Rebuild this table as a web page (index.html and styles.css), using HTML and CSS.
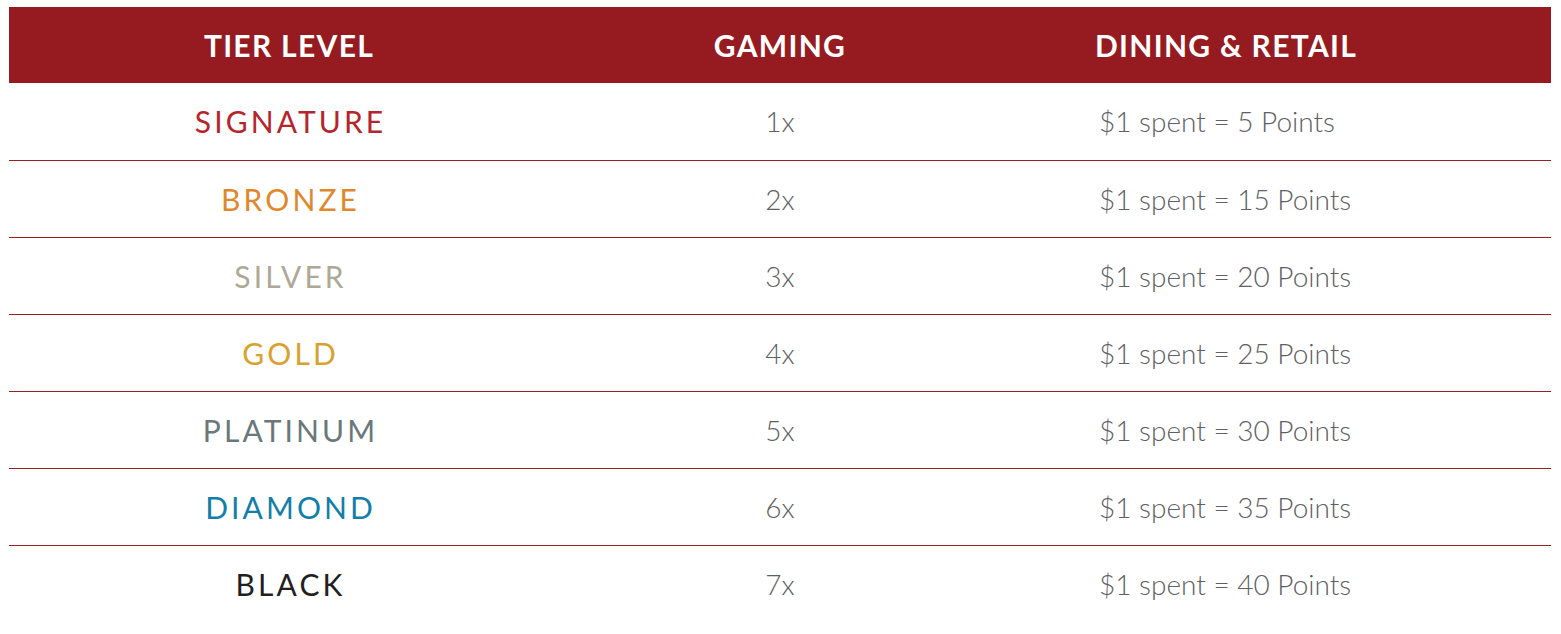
FILE: index.html
```html
<!DOCTYPE html>
<html lang="en">
<head>
<meta charset="utf-8">
<title>Tier Levels</title>
<link rel="stylesheet" href="styles.css">
</head>
<body>
<table class="tiers">
  <colgroup>
    <col class="c-tier">
    <col class="c-gaming">
    <col class="c-dining">
  </colgroup>
  <thead>
    <tr>
      <th class="h-center">TIER LEVEL</th>
      <th class="h-center">GAMING</th>
      <th class="h-left">DINING &amp; RETAIL</th>
    </tr>
  </thead>
  <tbody>
    <tr><td class="tier signature">SIGNATURE</td><td class="mult">1x</td><td class="pts">$1 spent = 5 Points</td></tr>
    <tr><td class="tier bronze">BRONZE</td><td class="mult">2x</td><td class="pts">$1 spent = 15 Points</td></tr>
    <tr><td class="tier silver">SILVER</td><td class="mult">3x</td><td class="pts">$1 spent = 20 Points</td></tr>
    <tr><td class="tier gold">GOLD</td><td class="mult">4x</td><td class="pts">$1 spent = 25 Points</td></tr>
    <tr><td class="tier platinum">PLATINUM</td><td class="mult">5x</td><td class="pts">$1 spent = 30 Points</td></tr>
    <tr><td class="tier diamond">DIAMOND</td><td class="mult">6x</td><td class="pts">$1 spent = 35 Points</td></tr>
    <tr class="last"><td class="tier black">BLACK</td><td class="mult">7x</td><td class="pts">$1 spent = 40 Points</td></tr>
  </tbody>
</table>
</body>
</html>
```
FILE: styles.css
```css
html, body {
  margin: 0;
  padding: 0;
  background: #ffffff;
}
body {
  padding: 7px 0 0 9px;
  font-family: Lato, "Liberation Sans", sans-serif;
}
.tiers {
  width: 1542px;
  table-layout: fixed;
  border-collapse: collapse;
  border-spacing: 0;
}
.c-tier { width: 560px; }
.c-gaming { width: 422px; }
.c-dining { width: 560px; }

.tiers thead tr {
  background: #951b21;
  height: 76px;
}
.tiers th {
  color: #ffffff;
  font-weight: 700;
  font-size: 30px;
  letter-spacing: 1.3px;
  padding: 0;
  vertical-align: middle;
}
.h-center { text-align: center; }
.h-left { text-align: left; padding-left: 104px !important; }

.tiers tbody tr {
  height: 77px;
  border-bottom: 1px solid #9c1e25;
}
.tiers tbody tr.last { border-bottom: none; }
.tiers td {
  padding: 0;
  vertical-align: middle;
}
.tier {
  text-align: center;
  font-size: 30px;
  font-weight: 400;
  letter-spacing: 3.1px;
  text-indent: 3.1px;
}
.mult {
  text-align: center;
  font-size: 28px;
  font-weight: 300;
  color: #5e6063;
}
.pts {
  text-align: left;
  padding-left: 108px !important;
  font-size: 28px;
  font-weight: 300;
  color: #5e6063;
}
.signature { color: #b5252c; }
.bronze { color: #e0882c; }
.silver { color: #aea996; }
.gold { color: #d9a22e; }
.platinum { color: #6a7879; }
.diamond { color: #127fa8; }
.black { color: #231f20; }
```
